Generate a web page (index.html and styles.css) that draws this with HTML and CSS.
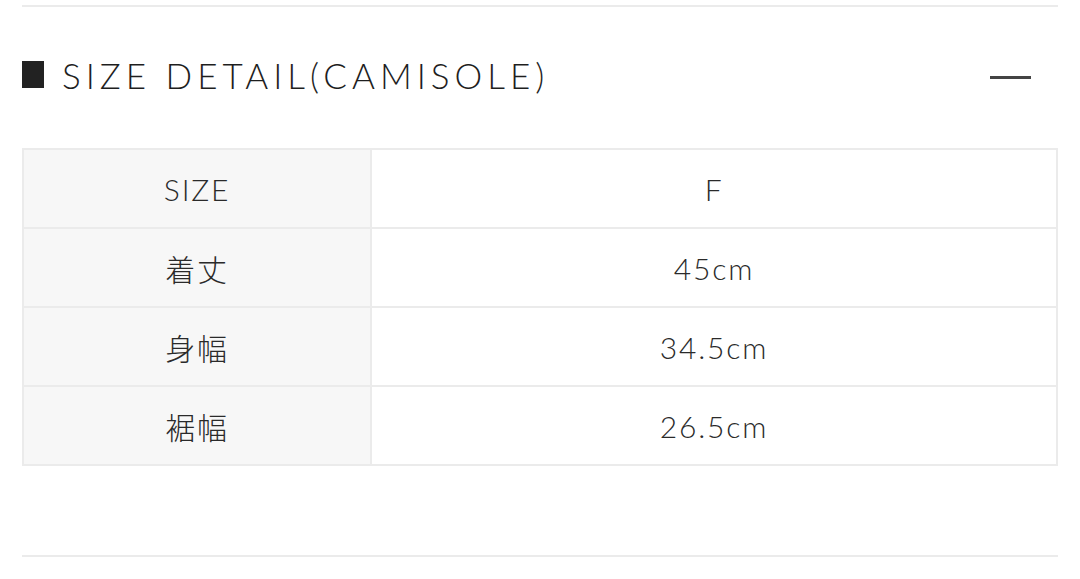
FILE: index.html
```html
<!DOCTYPE html>
<html lang="ja">
<head>
<meta charset="utf-8">
<link rel="stylesheet" href="styles.css">
</head>
<body>
<div class="page">
  <hr class="rule top">
  <div class="head">
    <h2 class="title"><span class="sq"></span>SIZE DETAIL(CAMISOLE)</h2>
    <span class="minus"></span>
  </div>
  <table class="size">
    <tr><th>SIZE</th><td>F</td></tr>
    <tr><th>着丈</th><td>45cm</td></tr>
    <tr><th>身幅</th><td>34.5cm</td></tr>
    <tr><th>裾幅</th><td>26.5cm</td></tr>
  </table>
  <hr class="rule bottom">
</div>
</body>
</html>
```
FILE: styles.css
```css
html, body { margin: 0; padding: 0; background: #fff; }
body { font-family: Lato, "Noto Sans CJK JP", sans-serif; color: #333; }
.page { padding: 0 22px 0 22px; width: 1036px; }
.rule { border: 0; height: 2px; background: #ebebeb; margin: 0; }
.rule.top { margin-top: 5px; }
.head { display: flex; align-items: center; justify-content: space-between; height: 141px; }
.title { margin: 0; font-weight: 300; font-size: 35px; letter-spacing: 5px; color: #1e1e1e; display: flex; align-items: center; padding-bottom: 6px; }
.sq { display: inline-block; width: 22px; height: 27px; background: #222; margin: 0 18px 0 0; }
.minus { width: 41px; height: 3px; background: #444; margin-right: 27px; margin-bottom: 0; }
table.size { width: 1036px; border-collapse: collapse; margin: 0; }
table.size th, table.size td { border: 2px solid #ebebeb; height: 77px; text-align: center; font-size: 30px; font-weight: 300; letter-spacing: 1.8px; padding: 0; color: #2a2a2a; }
table.size th { width: 346px; background: #f7f7f7; }
.rule.bottom { margin-top: 89px; }
```
